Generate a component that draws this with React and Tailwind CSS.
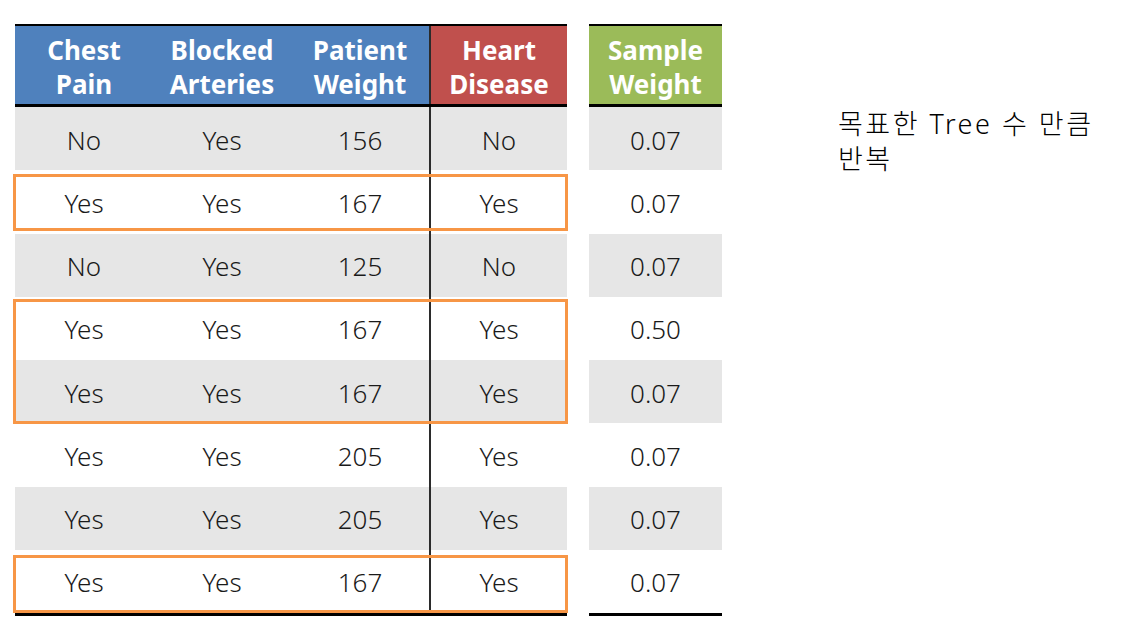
const ROWS = [
  ['No', 'Yes', '156', 'No', '0.07'],
  ['Yes', 'Yes', '167', 'Yes', '0.07'],
  ['No', 'Yes', '125', 'No', '0.07'],
  ['Yes', 'Yes', '167', 'Yes', '0.50'],
  ['Yes', 'Yes', '167', 'Yes', '0.07'],
  ['Yes', 'Yes', '205', 'Yes', '0.07'],
  ['Yes', 'Yes', '205', 'Yes', '0.07'],
  ['Yes', 'Yes', '167', 'Yes', '0.07'],
]

const FONT = { fontFamily: '"Noto Sans", "Open Sans", "Noto Sans CJK KR", sans-serif' }

function HeaderCell({ children, color, divider }) {
  return (
    <div className={`flex w-[138px] items-center justify-center pt-[4px] text-center text-[26px] font-bold leading-[34px] text-white ${color} ${divider ? 'border-l-2 border-[#2b2b2b]' : ''}`}>
      {children}
    </div>
  )
}

export default function App() {
  return (
    <div className="flex h-[632px] w-[1122px] bg-white text-[#1a1a1a]" style={FONT}>
      {/* main table */}
      <div className="relative ml-[15px] mt-[24px] w-[552px]">
        <div className="flex h-[83px] border-t-2 border-b-[3px] border-black">
          <HeaderCell color="bg-[#4f81bd]">Chest<br />Pain</HeaderCell>
          <HeaderCell color="bg-[#4f81bd]">Blocked<br />Arteries</HeaderCell>
          <HeaderCell color="bg-[#4f81bd]">Patient<br />Weight</HeaderCell>
          <HeaderCell color="bg-[#c0504d]" divider>Heart<br />Disease</HeaderCell>
        </div>
        <div className="border-b-[3px] border-black">
          {ROWS.map((r, i) => (
            <div key={i} className={`flex h-[63.25px] text-[26px] font-light ${i % 2 === 0 ? 'bg-[#e6e6e6]' : 'bg-white'}`}>
              {r.slice(0, 4).map((c, j) => (
                <div key={j} className={`flex w-[138px] items-center justify-center pt-[3px] ${j === 3 ? 'border-l-2 border-[#2b2b2b]' : ''}`}>
                  {c}
                </div>
              ))}
            </div>
          ))}
        </div>

        {/* highlighted rows */}
        <div className="absolute left-[-2px] top-[150px] h-[57px] w-[555px] border-[3px] border-[#f79646]" />
        <div className="absolute left-[-2px] top-[275px] h-[125px] w-[555px] border-[3px] border-[#f79646]" />
        <div className="absolute left-[-2px] top-[531px] h-[58px] w-[555px] border-[3px] border-[#f79646]" />
      </div>

      {/* sample weight */}
      <div className="ml-[22px] mt-[24px] w-[133px]">
        <div className="flex h-[83px] items-center justify-center border-t-2 border-b-[3px] border-black bg-[#9bbb59] pt-[4px] text-center text-[26px] font-bold leading-[34px] text-white">
          Sample<br />Weight
        </div>
        <div className="border-b-[3px] border-black">
          {ROWS.map((r, i) => (
            <div key={i} className={`flex h-[63.25px] items-center justify-center pt-[3px] text-[26px] font-light ${i % 2 === 0 ? 'bg-[#e6e6e6]' : 'bg-white'}`}>
              {r[4]}
            </div>
          ))}
        </div>
      </div>

      <div className="ml-[116px] mt-[106px] text-[27px] font-light leading-[35px] tracking-[2.5px] text-black" style={{ fontFamily: '"Noto Sans", "Noto Sans CJK KR", sans-serif' }}>
        목표한 Tree 수 만큼<br />반복
      </div>
    </div>
  )
}
